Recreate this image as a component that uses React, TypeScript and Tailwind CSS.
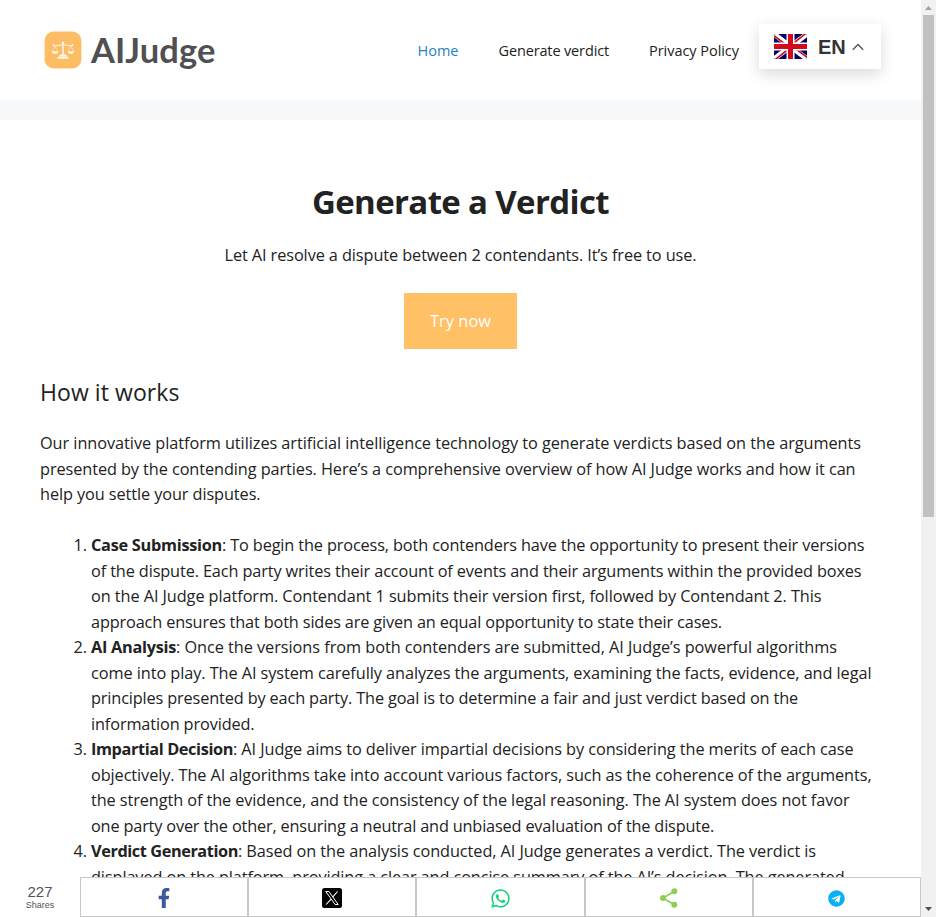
import React, { useLayoutEffect, useRef, useState } from "react";
import { FaFacebookF, FaTelegram, FaWhatsapp } from "react-icons/fa";

// Spreads a run of text over a set width by adjusting its tracking.
function Fit({ text, width, className = "" }: { text: string; width: number; className?: string }) {
  const ref = useRef<HTMLSpanElement>(null);
  const [spacing, setSpacing] = useState(0);
  useLayoutEffect(() => {
    const el = ref.current;
    if (el) setSpacing((width - el.getBoundingClientRect().width) / text.length);
  }, [text, width]);
  return (
    <span ref={ref} className={`inline-block whitespace-pre ${className}`} style={{ letterSpacing: spacing }}>
      {text}
    </span>
  );
}

type Line = [string, number];
type Step = { title: string; titleWidth: number; lines: Line[] };

const intro: Line[] = [
  ["Our innovative platform utilizes artificial intelligence technology to generate verdicts based on the arguments", 821],
  ["presented by the contending parties. Here’s a comprehensive overview of how AI Judge works and how it can", 815.5],
  ["help you settle your disputes.", 220.5],
];

const steps: Step[] = [
  {
    title: "Case Submission",
    titleWidth: 131,
    lines: [
      [": To begin the process, both contenders have the opportunity to present their versions", 642.5],
      ["of the dispute. Each party writes their account of events and their arguments within the provided boxes", 770.5],
      ["on the AI Judge platform. Contendant 1 submits their version first, followed by Contendant 2. This", 730.5],
      ["approach ensures that both sides are given an equal opportunity to state their cases.", 631],
    ],
  },
  {
    title: "AI Analysis",
    titleWidth: 85,
    lines: [
      [": Once the versions from both contenders are submitted, AI Judge’s powerful algorithms", 661],
      ["come into play. The AI system carefully analyzes the arguments, examining the facts, evidence, and legal", 780.5],
      ["principles presented by each party. The goal is to determine a fair and just verdict based on the", 707],
      ["information provided.", 163.5],
    ],
  },
  {
    title: "Impartial Decision",
    titleWidth: 142,
    lines: [
      [": AI Judge aims to deliver impartial decisions by considering the merits of each case", 620.5],
      ["objectively. The AI algorithms take into account various factors, such as the coherence of the arguments,", 780.5],
      ["the strength of the evidence, and the consistency of the legal reasoning. The AI system does not favor", 758.5],
      ["one party over the other, ensuring a neutral and unbiased evaluation of the dispute.", 623],
    ],
  },
  {
    title: "Verdict Generation",
    titleWidth: 147,
    lines: [
      [": Based on the analysis conducted, AI Judge generates a verdict. The verdict is", 578],
      ["displayed on the platform, providing a clear and concise summary of the AI’s decision. The generated", 753.5],
    ],
  },
];

function Logo() {
  return (
    <div className="flex items-center">
      <svg width="38" height="38" viewBox="0 0 38 38">
        <rect x=".6" y=".6" width="36.8" height="36.8" rx="9" fill="#fdbd65" />
        <g fill="none" stroke="#fff7e8" strokeLinecap="round">
          <path d="M19 11.500v13" strokeWidth="1.500" />
          <path d="M10 14.500c4 .8 5.500-.8 9-.8s5 1.600 9 .8" strokeWidth="1.100" />
          <path d="m11 15-2.800 5.500m2.800-5.500 2.800 5.500m13.200-5.500-2.800 5.500m2.800-5.500 2.800 5.500" strokeWidth=".5" />
        </g>
        <g fill="#fff7e8">
          <circle cx="19" cy="12" r="1.300" />
          <circle cx="9.500" cy="14.300" r="1" />
          <circle cx="28.500" cy="14.300" r="1" />
          <path d="M7.800 20.300h6.600c-.4 3.700-6.200 3.700-6.600 0Zm15.800 0h6.600c-.4 3.700-6.200 3.700-6.600 0ZM16 23.500h6l1 2h-8Zm-2.500 2.300h11v2h-11Z" />
        </g>
      </svg>
      <span className="ml-[9px] font-['Lato',sans-serif] text-[34.500px] leading-[38px] font-bold text-[#505052]">
        <Fit text="AIJudge" width={124.500} />
      </span>
    </div>
  );
}

function Flag() {
  return (
    <svg width="33" height="25" viewBox="0 0 33 25">
      <defs>
        <clipPath id="flag-corners"><rect width="33" height="25" rx="2" /></clipPath>
      </defs>
      <g clipPath="url(#flag-corners)">
        <path fill="#000066" d="M0 0h33v25H0z" />
        <path d="m-2-1.500 37 28m0-28-37 28" stroke="#fff" strokeWidth="5" />
        <path d="M-1 1 13 11.500M34 24 20 13.500M33-1.500 19 9.500M0 26.500 14 15.500" stroke="#cc0d1e" strokeWidth="1.600" />
        <path d="M16.500 0v25M0 12.500h33" stroke="#fff" strokeWidth="8" />
        <path d="M16.500 0v25M0 12.500h33" stroke="#d00c1c" strokeWidth="5" />
      </g>
    </svg>
  );
}

function XIcon() {
  return (
    <svg width="20" height="20" viewBox="0 0 20 20">
      <rect width="20" height="20" rx="2.500" fill="#000" />
      <path d="M3.800 3.500h3.100l9.300 13h-3.100Z" fill="none" stroke="#fff" strokeWidth="1" />
      <path d="m15.600 3.500-5 5.700M9 11.100l-4.800 5.400" stroke="#fff" strokeWidth="1.100" />
    </svg>
  );
}

function ShareIcon() {
  return (
    <svg width="20" height="20" viewBox="0 0 20 20">
      <path d="M15.500 3.200 4 10l11.500 6.800" fill="none" stroke="#90d050" strokeWidth="1.700" />
      <g fill="#90d050">
        <circle cx="15.300" cy="3.300" r="3" />
        <circle cx="4" cy="10" r="3" />
        <circle cx="15.300" cy="16.700" r="3" />
      </g>
    </svg>
  );
}

const shares = [
  <FaFacebookF key="f" size={20} color="#3b5998" />,
  <XIcon key="x" />,
  <FaWhatsapp key="w" size={21} color="#12d07c" />,
  <ShareIcon key="s" />,
  <FaTelegram key="t" size={17} color="#08b0f5" />,
];

export default function App() {
  return (
    <div className="relative flex h-[917px] w-[936px] overflow-hidden bg-white font-['Open_Sans',sans-serif] text-[#222]">
      <div className="h-full w-[921px] shrink-0 overflow-hidden">
        <header className="flex h-[100px] items-center justify-between pr-10 pl-11">
          <Logo />
          <div className="flex items-center">
            <nav className="flex gap-10 pt-0.5 pr-5 text-[14.500px] leading-5">
              <a className="text-[#1e83c4]"><Fit text="Home" width={41} /></a>
              <a><Fit text="Generate verdict" width={110.500} /></a>
              <a><Fit text="Privacy Policy" width={90} /></a>
            </nav>
            <button className="relative -top-1 flex h-[45px] w-[122px] items-center bg-white pl-[15px] shadow-[0_5px_15px_rgba(0,0,0,0.15)]">
              <Flag />
              <span className="mt-px ml-[11px] font-['Liberation_Sans',sans-serif] text-[20px] font-bold text-[#333]">EN</span>
              <svg className="mt-px ml-[6px]" width="12" height="8" viewBox="0 0 12 8">
                <path d="m.8 6.800 5.200-5.300 5.200 5.300" fill="none" stroke="#555" strokeWidth="1.400" />
              </svg>
            </button>
          </div>
        </header>
        <div className="h-5 bg-[#f7f8f9]" />
        <main className="px-10 pt-[58px]">
          <h1 className="text-center text-[33px] leading-[48px] font-bold"><Fit text="Generate a Verdict" width={297} /></h1>
          <p className="mt-[17px] text-center text-[16.300px] leading-[25.500px]">
            <Fit text="Let AI resolve a dispute between 2 contendants. It’s free to use." width={472} />
          </p>
          <div className="mt-[24.500px] flex justify-center">
            <button className="h-14 w-[113px] bg-[#ffc066] text-[16.300px] text-white"><Fit text="Try now" width={61} /></button>
          </div>
          <h2 className="mt-[26px] text-[23px] leading-[34px]"><Fit text="How it works" width={139.500} /></h2>
          <div className="mt-[22px] text-[16.300px] leading-[25.500px]">
            {intro.map(([text, width]) => (
              <div key={text} className="h-[25.500px]"><Fit text={text} width={width} /></div>
            ))}
          </div>
          <ol className="mt-[25.500px] text-[16.300px] leading-[25.500px]">
            {steps.map((step, i) => (
              <li key={step.title} className="flex">
                <span className="w-[51px] shrink-0 pr-[4px] text-right">{i + 1}.</span>
                <div>
                  {step.lines.map(([text, width], n) => (
                    <div key={text} className="h-[25.500px] whitespace-nowrap">
                      {n === 0 && <Fit text={step.title} width={step.titleWidth} className="font-bold" />}
                      <Fit text={text} width={width} />
                    </div>
                  ))}
                </div>
              </li>
            ))}
          </ol>
        </main>
      </div>
      <aside className="relative h-full w-[15px] bg-[#f1f1f1]">
        <div className="mx-auto mt-[15px] h-[502px] w-[11px] bg-[#c1c1c1]" />
        <svg className="absolute top-0 left-0" width="15" height="917" viewBox="0 0 15 917">
          <path d="M4 10h7L7.500 6Z" fill="#a3a3a3" />
          <path d="M4 907h7l-3.500 4Z" fill="#505050" />
        </svg>
      </aside>
      <footer className="absolute bottom-0 left-0 flex h-10 w-[921px] bg-white font-['Liberation_Sans',sans-serif] text-[#555]">
        <div className="flex w-20 shrink-0 flex-col items-center pt-[7px]">
          <span className="text-[15px] leading-[16px]">227</span>
          <span className="text-[9px] leading-[10px]">Shares</span>
        </div>
        <div className="grid flex-1 grid-cols-5">
          {shares.map((icon, i) => (
            <a key={i} className="flex items-center justify-center border border-[#c8c8c8] pt-0.5">{icon}</a>
          ))}
        </div>
      </footer>
    </div>
  );
}
